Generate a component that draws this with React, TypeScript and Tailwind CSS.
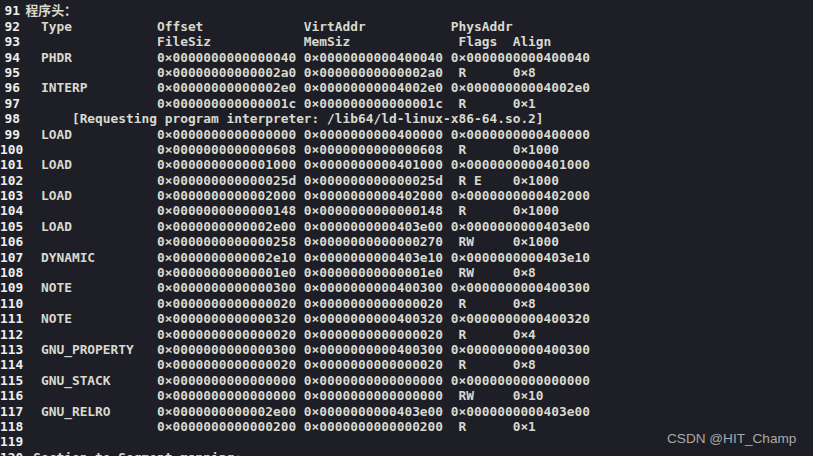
import React from 'react';

// readelf -l output as shown in the terminal, numbered from line 90
const LINES: string[] = [
  '',
  '程序头：',
  '  Type           Offset             VirtAddr           PhysAddr',
  '                 FileSiz            MemSiz              Flags  Align',
  '  PHDR           0×0000000000000040 0×0000000000400040 0×0000000000400040',
  '                 0×00000000000002a0 0×00000000000002a0  R      0×8',
  '  INTERP         0×00000000000002e0 0×00000000004002e0 0×00000000004002e0',
  '                 0×000000000000001c 0×000000000000001c  R      0×1',
  '      [Requesting program interpreter: /lib64/ld-linux-x86-64.so.2]',
  '  LOAD           0×0000000000000000 0×0000000000400000 0×0000000000400000',
  '                 0×0000000000000608 0×0000000000000608  R      0×1000',
  '  LOAD           0×0000000000001000 0×0000000000401000 0×0000000000401000',
  '                 0×000000000000025d 0×000000000000025d  R E    0×1000',
  '  LOAD           0×0000000000002000 0×0000000000402000 0×0000000000402000',
  '                 0×0000000000000148 0×0000000000000148  R      0×1000',
  '  LOAD           0×0000000000002e00 0×0000000000403e00 0×0000000000403e00',
  '                 0×0000000000000258 0×0000000000000270  RW     0×1000',
  '  DYNAMIC        0×0000000000002e10 0×0000000000403e10 0×0000000000403e10',
  '                 0×00000000000001e0 0×00000000000001e0  RW     0×8',
  '  NOTE           0×0000000000000300 0×0000000000400300 0×0000000000400300',
  '                 0×0000000000000020 0×0000000000000020  R      0×8',
  '  NOTE           0×0000000000000320 0×0000000000400320 0×0000000000400320',
  '                 0×0000000000000020 0×0000000000000020  R      0×4',
  '  GNU_PROPERTY   0×0000000000000300 0×0000000000400300 0×0000000000400300',
  '                 0×0000000000000020 0×0000000000000020  R      0×8',
  '  GNU_STACK      0×0000000000000000 0×0000000000000000 0×0000000000000000',
  '                 0×0000000000000000 0×0000000000000000  RW     0×10',
  '  GNU_RELRO      0×0000000000002e00 0×0000000000403e00 0×0000000000403e00',
  '                 0×0000000000000200 0×0000000000000200  R      0×1',
  '',
  ' Section to Segment mapping:',
];

const FIRST = 90;

const App: React.FC = () => {
  return (
    <div className="relative w-[813px] h-[456px] overflow-hidden bg-[#1e1f26]">
      <div
        className="mt-[-12px] font-bold text-[12.85px] leading-[15.4px] text-[#d9d9cf]"
        style={{ fontFamily: '"DejaVu Sans Mono", "Noto Sans CJK SC", monospace' }}
      >
        {LINES.map((line, i) => (
          <div key={i} className="flex h-[15.4px]">
            <div className="w-[20px] shrink-0 text-right text-[#eeeeee] overflow-visible whitespace-pre">
              {FIRST + i}
            </div>
            <div className="ml-[5.5px] whitespace-pre">{line}</div>
          </div>
        ))}
      </div>
      <div
        className="absolute left-[667px] top-[429px] text-[13.6px] text-[#a9a9a9]"
        style={{ fontFamily: '"Liberation Sans", Arial, sans-serif' }}
      >
        CSDN @HIT_Champ
      </div>
    </div>
  );
};

export default App;
